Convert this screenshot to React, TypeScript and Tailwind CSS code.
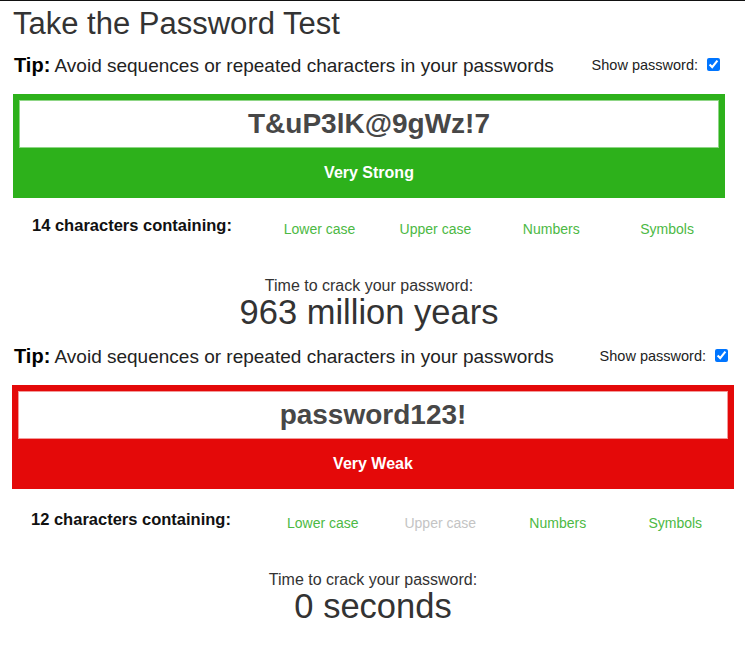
import React from 'react';

type Check = { label: string; ok: boolean };

type TestProps = {
  password: string;
  strength: string;
  boxColor: string;
  innerBorder: string;
  count: number;
  checks: Check[];
  crackTime: string;
  wrapClass: string;
  tipClass: string;
  statsClass: string;
  firstColClass: string;
  colClass: string;
};

const font = { fontFamily: '"Liberation Sans", Arial, sans-serif' };

const PasswordTest: React.FC<TestProps> = (p) => {
  return (
    <div className={p.wrapClass}>
      <div className={`flex items-center justify-between h-[37px] ${p.tipClass}`}>
        <div className="text-[19px] text-[#222] whitespace-nowrap">
          <span className="font-bold text-[20px] text-black">Tip:</span> Avoid sequences or repeated characters in your passwords
        </div>
        <label className="flex items-center text-[14.5px] text-[#222] whitespace-nowrap">
          Show password:
          <input type="checkbox" checked readOnly className="ml-[9px] w-[13px] h-[13px] m-0 accent-[#0075ff] -mt-[3px]" />
        </label>
      </div>

      {/* strength box */}
      <div className={`mt-[10px] px-[6px] pt-[6px] ${p.boxColor}`}>
        <div className={`h-[48px] bg-white border flex items-center justify-center ${p.innerBorder}`}>
          <span className="text-[28px] font-bold text-[#474747]">{p.password}</span>
        </div>
        <div className="h-[50px] flex items-center justify-center text-white font-bold text-[16px]">
          {p.strength}
        </div>
      </div>

      <div className={`flex items-start ${p.statsClass}`}>
        <div className={`pl-[19px] h-[24px] leading-[24px] text-[16.5px] font-bold text-[#111] whitespace-nowrap ${p.firstColClass}`}>
          {p.count} characters containing:
        </div>
        {p.checks.map((c) => (
          <div
            key={c.label}
            className={`pt-[4px] leading-[24px] text-center text-[14px] ${p.colClass} ${c.ok ? 'text-[#4cb944]' : 'text-[#c4c4c4]'}`}
          >
            {c.label}
          </div>
        ))}
      </div>

      <div className="mt-[35px] flex flex-col items-center text-[#333]">
        <div className="h-[19px] leading-[19px] text-[16px]">Time to crack your password:</div>
        <div className="h-[34px] leading-[34px] text-[34.5px]">{p.crackTime}</div>
      </div>
    </div>
  );
};

const App: React.FC = () => {
  return (
    <div className="w-[745px] h-[660px] bg-white border-t border-[#111] overflow-hidden" style={font}>
      <h1 className="h-[46px] leading-[46px] pl-[13px] text-[31px] text-[#333]">Take the Password Test</h1>

      <PasswordTest
        password="T&uP3lK@9gWz!7"
        strength="Very Strong"
        boxColor="bg-[#2db11b]"
        innerBorder="border-[#8fd686]"
        count={14}
        checks={[
          { label: 'Lower case', ok: true },
          { label: 'Upper case', ok: true },
          { label: 'Numbers', ok: true },
          { label: 'Symbols', ok: true },
        ]}
        crackTime="963 million years"
        wrapClass="ml-[13px] w-[712px]"
        tipClass="pl-[1px] pr-[5px]"
        statsClass="mt-[15px]"
        firstColClass="w-[249px]"
        colClass="w-[116px]"
      />

      <PasswordTest
        password="password123!"
        strength="Very Weak"
        boxColor="bg-[#e40909]"
        innerBorder="border-[#f29a9a]"
        count={12}
        checks={[
          { label: 'Lower case', ok: true },
          { label: 'Upper case', ok: false },
          { label: 'Numbers', ok: true },
          { label: 'Symbols', ok: true },
        ]}
        crackTime="0 seconds"
        wrapClass="mt-[9px] ml-[12px] w-[722px]"
        tipClass="pl-[2px] pr-[6px]"
        statsClass="mt-[18px]"
        firstColClass="w-[253px]"
        colClass="w-[118px]"
      />
    </div>
  );
};

export default App;
